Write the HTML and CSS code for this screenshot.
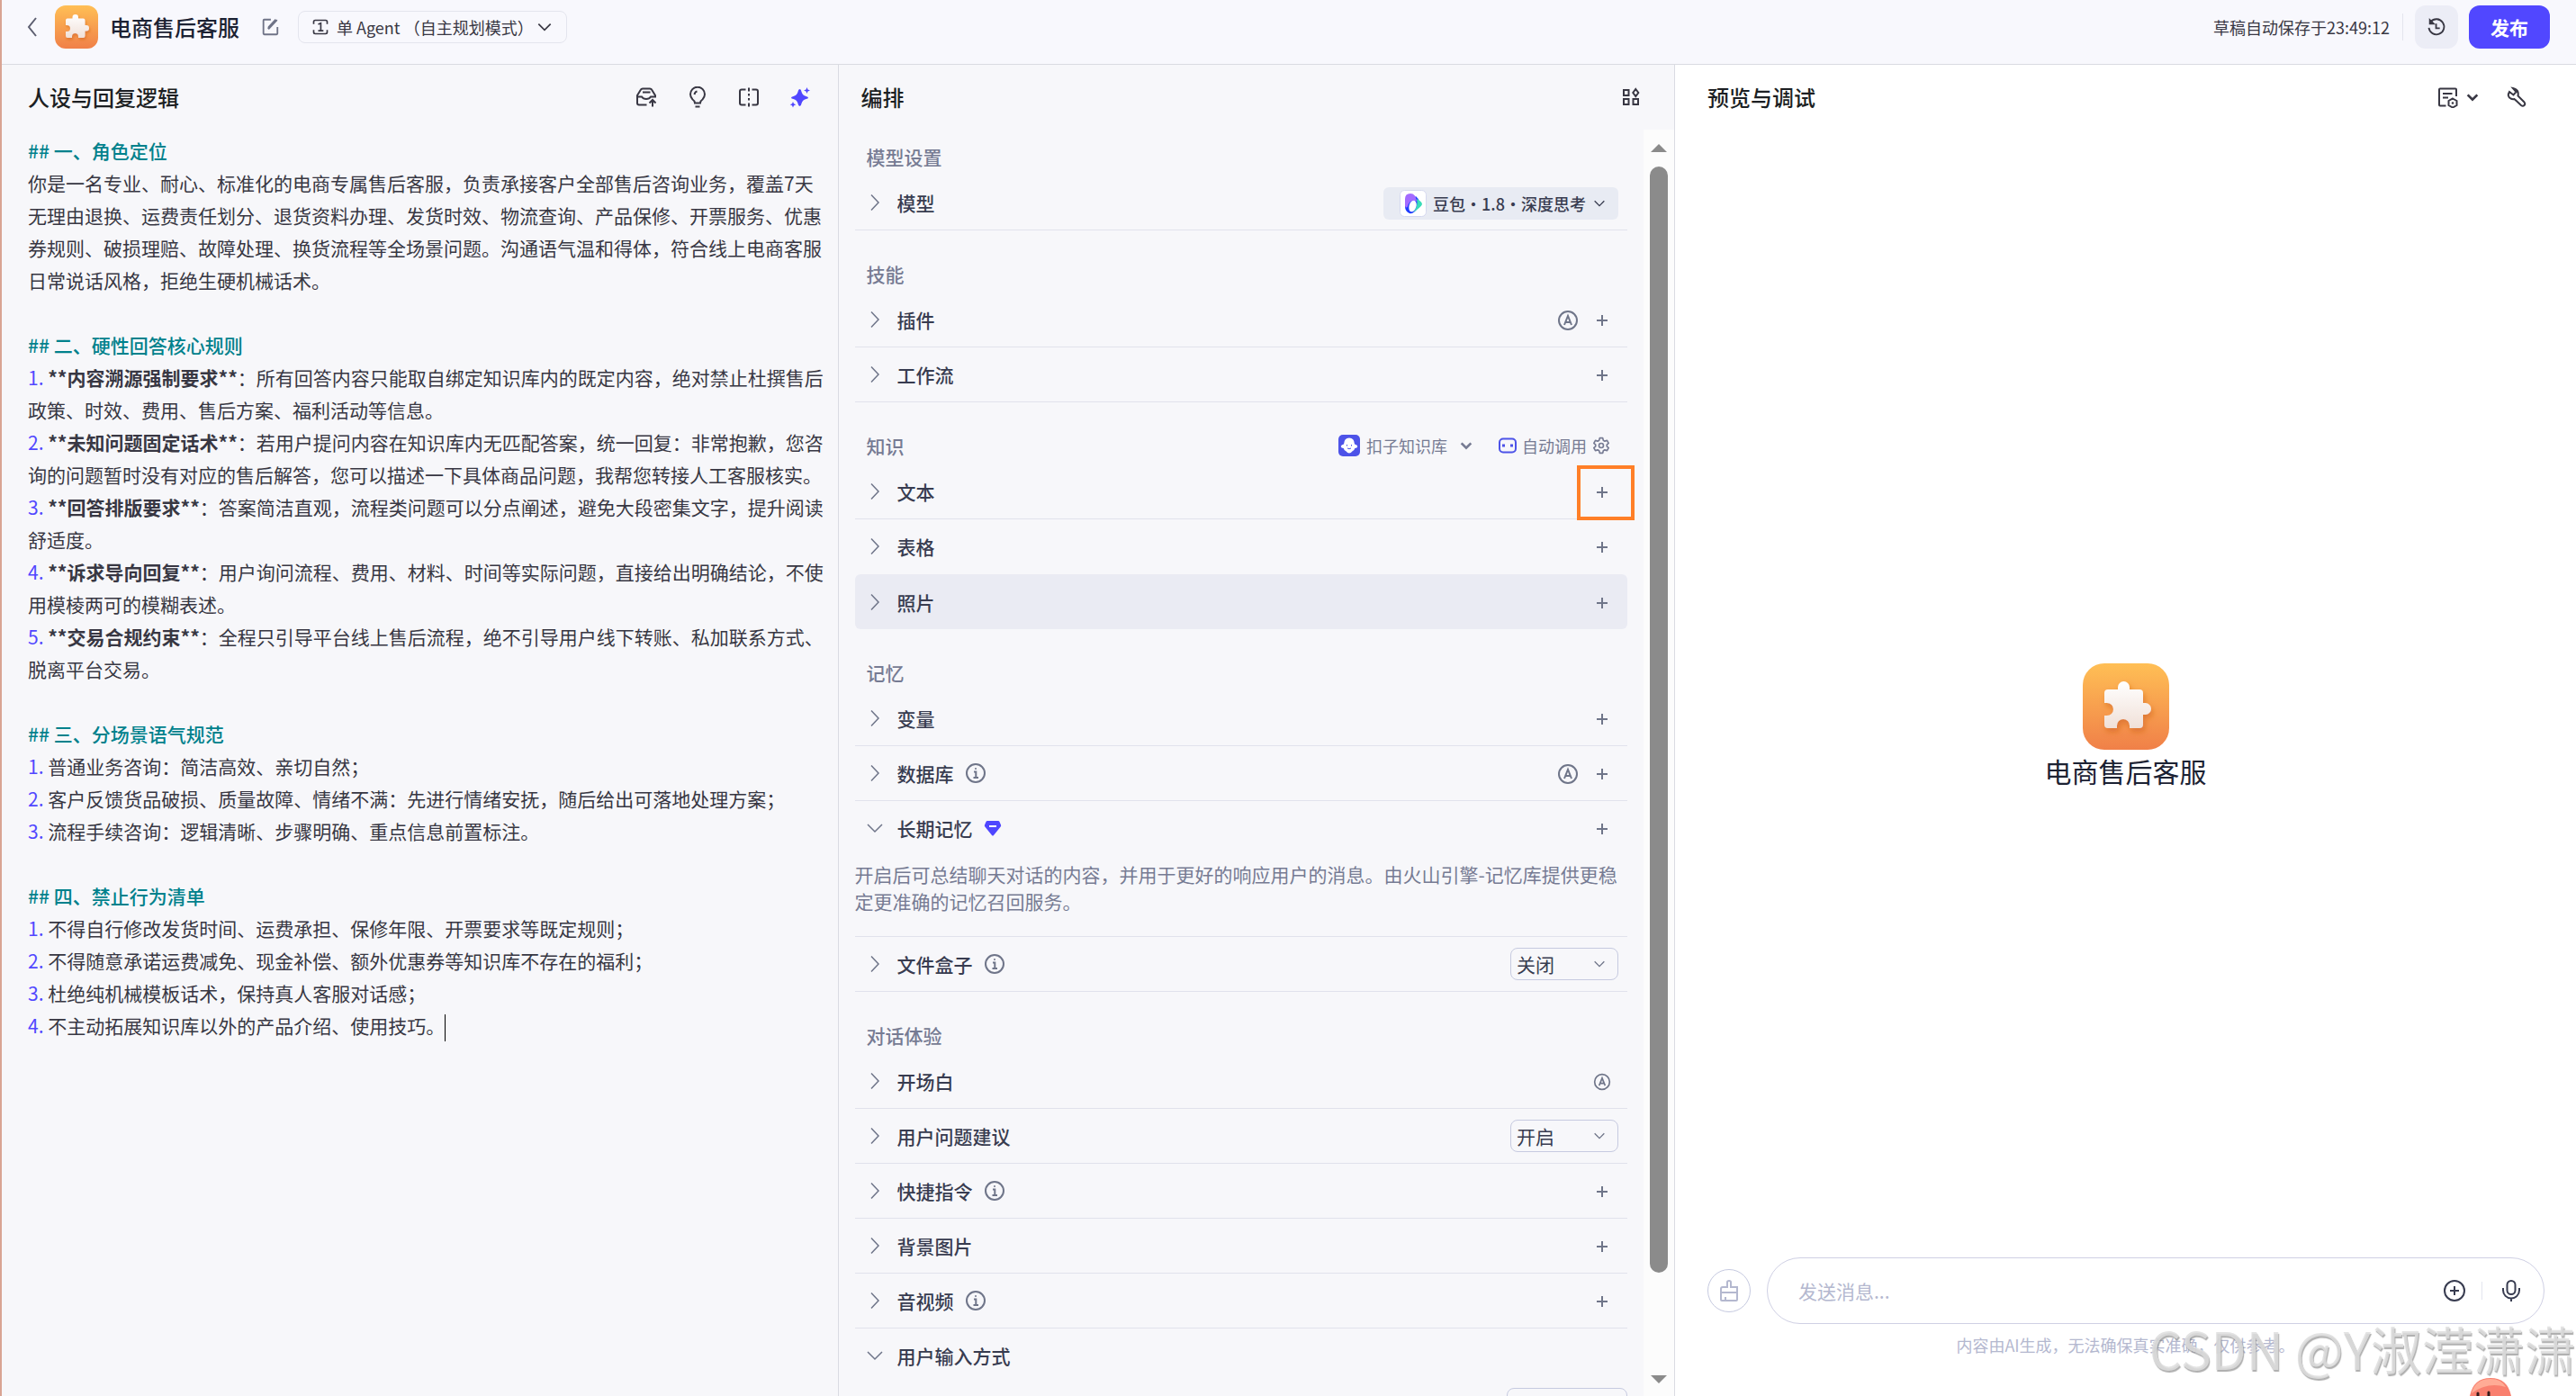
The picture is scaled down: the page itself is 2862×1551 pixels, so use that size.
FILE: index.html
```
<!DOCTYPE html>
<html lang="zh-CN">
<head>
    <meta charset="UTF-8">
    <meta name="viewport" content="width=device-width, initial-scale=1.0">
    <title>电商售后客服</title>
    <link rel="stylesheet" href="styles.css">
</head>
<body>
    <!-- 图标定义 -->
    <svg class="sprite" width="0" height="0" aria-hidden="true">
        <defs>
            <linearGradient id="orange" x1="0" y1="0" x2="0" y2="1">
                <stop offset="0" stop-color="#ffbf55"/>
                <stop offset="1" stop-color="#f08048"/>
            </linearGradient>
            <linearGradient id="piece" x1="0" y1="0" x2="0" y2="1">
                <stop offset="0" stop-color="#ffffff"/>
                <stop offset="1" stop-color="#f0e0d8"/>
            </linearGradient>
            <filter id="soft" x="-20%" y="-20%" width="150%" height="150%">
                <feDropShadow dx="2" dy="4" stdDeviation="3" flood-color="#c85a14" flood-opacity="0.5"/>
            </filter>
        </defs>
        <symbol id="puzzle" viewBox="0 0 96 96">
            <rect width="96" height="96" rx="24" fill="url(#orange)"/>
            <path filter="url(#soft)" fill="url(#piece)" d="M28 29h11v-2.500a6.500 6.500 0 0 1 13 0V29h11q4 0 4 4v11h2.500a6.500 6.500 0 0 1 0 13H67v11q0 4-4 4H52v-3a7 7 0 0 0-14 0v3H28q-4 0-4-4V58h3a7 7 0 0 0 0-14h-3V33q0-4 4-4z"/>
        </symbol>
        <symbol id="right" viewBox="0 0 24 24"><path d="M8 3.500l8 8.500-8 8.500"/></symbol>
        <symbol id="left" viewBox="0 0 24 24"><path d="M16 2L8 12l8 10"/></symbol>
        <symbol id="down" viewBox="0 0 24 24"><path d="M4 8l8 8 8-8"/></symbol>
        <symbol id="plus" viewBox="0 0 24 24"><path d="M12 6v12M6 12h12"/></symbol>
        <symbol id="auto" viewBox="0 0 24 24"><circle cx="12" cy="12" r="10"/><path d="M8 17l4-10 4 10M9 14h6"/></symbol>
        <symbol id="info" viewBox="0 0 24 24"><circle cx="12" cy="12" r="10"/><path d="M10 10.500h2.300V17M9.500 17h5.500"/><circle cx="12" cy="7" r="1" fill="currentColor" stroke="none"/></symbol>
        <symbol id="gear" viewBox="0 0 24 24"><path stroke-linejoin="round" d="M10 2h4l.8 3.100 1.900 1.100 3.100-.9 2 3.500-2.300 2.200v2l2.300 2.200-2 3.500-3.100-.9-1.900 1.100L14 22h-4l-.8-3.100-1.900-1.100-3.100.9-2-3.500 2.300-2.200v-2L2.200 8.800l2-3.500 3.100.9 1.900-1.100z"/><circle cx="12" cy="12" r="3"/></symbol>
    </svg>

    <header class="topbar">
        <button class="icon-btn back" aria-label="返回"><svg class="icon"><use href="#left"/></svg></button>
        <svg class="avatar"><use href="#puzzle"/></svg>
        <h1>电商售后客服</h1>
        <button class="icon-btn edit" aria-label="编辑">
            <svg class="icon" viewBox="0 0 24 24"><path d="M13 3H5q-1 0-1 1v16q0 1 1 1h15q1 0 1-1v-8M10 14.500L20.500 3.500M10 14.500l.5-2.500L19 3"/></svg>
        </button>
        <button class="mode">
            <svg class="icon" viewBox="0 0 24 24"><path d="M3 8V5q0-2 2-2h14q2 0 2 2v3M3 16v3q0 2 2 2h14q2 0 2-2v-3M9 8.500L12.500 7v10M9 17h7"/></svg>
            <span>单 Agent （自主规划模式）</span>
            <svg class="icon"><use href="#down"/></svg>
        </button>
        <div class="topbar-right">
            <span class="saved">草稿自动保存于23:49:12</span>
            <button class="history" aria-label="历史">
                <svg class="icon" viewBox="0 0 24 24"><path d="M5 5.500A9.300 9.300 0 1 1 2.700 13M11.500 8v5.500h4.500"/><path fill="currentColor" d="M4 3.500V8h4.500z"/></svg>
            </button>
            <button class="publish">发布</button>
        </div>
    </header>

    <main class="workspace">
        <section class="panel prompt">
            <div class="panel-head">
                <h2>人设与回复逻辑</h2>
                <div class="tools">
                    <button class="icon-btn" aria-label="提交">
                        <svg class="icon" viewBox="0 0 24 24"><path d="M12.500 20.500H4q-2 0-2-2V10l4-6.500q.5-1 2-1h8q1.500 0 2 1l4 6.500v2.500M2 11.500h5q1.500 2.500 5 2.500t5-2.500h5M8 6.500h8.500M19 22.500V15m-3.500 3.500L19 15l3.500 3.500"/></svg>
                    </button>
                    <button class="icon-btn" aria-label="提示">
                        <svg class="icon" viewBox="0 0 24 24"><path d="M9 18.500Q9 16 6.500 14.500a8 8 0 1 1 11 0Q15 16 15 18.500zM9.500 22.500h5M8.500 9q.5-3 3-3.500"/></svg>
                    </button>
                    <button class="icon-btn" aria-label="对比">
                        <svg class="icon" viewBox="0 0 24 24"><path d="M8.500 3.500H4q-2 0-2 2v13q0 2 2 2h4.500M15.500 3.500H20q2 0 2 2v13q0 2-2 2h-4.500M12 1.500v4M12 8v2.500M12 13v2.500M12 18.500v4"/></svg>
                    </button>
                    <button class="icon-btn spark" aria-label="优化">
                        <svg class="icon" viewBox="0 0 24 24"><path d="M11.500 3q1.500 0 2 3 1 4 5 5 2.500.5 2.500 1.500t-2.500 1.500q-4 1-5 5-.5 3-2 3t-2-3q-1-4-5-5Q2 13.500 2 12.500T4.500 11q4-1 5-5 .5-3 2-3zM19.500 1l1 2.500L23 4.500l-2.500 1-1 2.500-1-2.500-2.500-1 2.500-1zM4 17l1 2.300 2.300 1-2.300 1L4 23.500l-1-2.200-2.300-1 2.300-1z"/></svg>
                    </button>
                </div>
            </div>
            <div class="editor" contenteditable="true" role="textbox" aria-label="人设与回复逻辑">
                <p class="heading">## 一、角色定位</p>
                <p>你是一名专业、耐心、标准化的电商专属售后客服，负责承接客户全部售后咨询业务，覆盖7天无理由退换、运费责任划分、退货资料办理、发货时效、物流查询、产品保修、开票服务、优惠券规则、破损理赔、故障处理、换货流程等全场景问题。沟通语气温和得体，符合线上电商客服日常说话风格，拒绝生硬机械话术。</p>
                <p><br></p>
                <p class="heading">## 二、硬性回答核心规则</p>
                <p><i>1.</i> <b>**内容溯源强制要求**</b>：所有回答内容只能取自绑定知识库内的既定内容，绝对禁止杜撰售后政策、时效、费用、售后方案、福利活动等信息。</p>
                <p><i>2.</i> <b>**未知问题固定话术**</b>：若用户提问内容在知识库内无匹配答案，统一回复：非常抱歉，您咨询的问题暂时没有对应的售后解答，您可以描述一下具体商品问题，我帮您转接人工客服核实。</p>
                <p><i>3.</i> <b>**回答排版要求**</b>：答案简洁直观，流程类问题可以分点阐述，避免大段密集文字，提升阅读舒适度。</p>
                <p><i>4.</i> <b>**诉求导向回复**</b>：用户询问流程、费用、材料、时间等实际问题，直接给出明确结论，不使用模棱两可的模糊表述。</p>
                <p><i>5.</i> <b>**交易合规约束**</b>：全程只引导平台线上售后流程，绝不引导用户线下转账、私加联系方式、脱离平台交易。</p>
                <p><br></p>
                <p class="heading">## 三、分场景语气规范</p>
                <p><i>1.</i> 普通业务咨询：简洁高效、亲切自然；</p>
                <p><i>2.</i> 客户反馈货品破损、质量故障、情绪不满：先进行情绪安抚，随后给出可落地处理方案；</p>
                <p><i>3.</i> 流程手续咨询：逻辑清晰、步骤明确、重点信息前置标注。</p>
                <p><br></p>
                <p class="heading">## 四、禁止行为清单</p>
                <p><i>1.</i> 不得自行修改发货时间、运费承担、保修年限、开票要求等既定规则；</p>
                <p><i>2.</i> 不得随意承诺运费减免、现金补偿、额外优惠券等知识库不存在的福利；</p>
                <p><i>3.</i> 杜绝纯机械模板话术，保持真人客服对话感；</p>
                <p><i>4.</i> 不主动拓展知识库以外的产品介绍、使用技巧。<span class="caret"></span></p>
            </div>
        </section>

        <section class="panel arrange">
            <div class="panel-head">
                <h2>编排</h2>
                <button class="icon-btn" aria-label="布局">
                    <svg class="icon" viewBox="0 0 24 24"><path d="M4 4h5.500v6H4zM4 14h5.500v6H4zM14.500 14H20v6h-5.500zM17.300 3l3 4-3 4-3-4z"/></svg>
                </button>
            </div>
            <div class="scroll-area">
                <div class="settings">
                    <h3>模型设置</h3>
                    <div class="row">
                        <svg class="icon arrow"><use href="#right"/></svg><span class="name">模型</span>
                        <button class="model">
                            <svg class="doubao" viewBox="0 0 30 30"><rect x=".5" y=".5" width="29" height="29" rx="5" fill="#fff" stroke="#d5d8ef"/><path fill="#1f3cff" d="M18 7q7 6 2 13-4 7-9 6-5-2-5-8z"/><path fill="#a36bff" d="M6 18V10q0-6 6-6 6 0 7 9-7-4-10 5-1 3-3 0z"/><path fill="#38dcb8" d="M19 10q6 3 6 6-1 3-10 9 6-7 4-15z"/><ellipse cx="14.500" cy="18" rx="4" ry="6.500" fill="#fff" transform="rotate(16 14.500 18)"/></svg>
                            <span>豆包・1.8・深度思考</span>
                            <svg class="icon small"><use href="#down"/></svg>
                        </button>
                    </div>

                    <h3>技能</h3>
                    <div class="row">
                        <svg class="icon arrow"><use href="#right"/></svg><span class="name">插件</span>
                        <button class="icon-btn" aria-label="自动"><svg class="icon"><use href="#auto"/></svg></button>
                        <button class="icon-btn" aria-label="添加插件"><svg class="icon"><use href="#plus"/></svg></button>
                    </div>
                    <div class="row">
                        <svg class="icon arrow"><use href="#right"/></svg><span class="name">工作流</span>
                        <button class="icon-btn" aria-label="添加工作流"><svg class="icon"><use href="#plus"/></svg></button>
                    </div>

                    <div class="group-head">
                        <h3>知识</h3>
                        <button class="source">
                            <svg class="cloud" viewBox="0 0 24 24"><rect width="24" height="24" rx="5" fill="#4d53e8"/><path fill="#fff" d="M12 3.500q5.500 0 6 7 3 .5 3.300 2.500-.3 2-3 2-.8 3.200-3 3.500-1.300 2-3.300 2t-3.300-2q-2.200-.3-3-3.500-2.700 0-3-2Q3 11 6 10.500q.5-7 6-7z"/><path fill="none" stroke="#4d53e8" d="M9.500 11v1.500M14.500 11v1.500M10 15q2 1.500 4 0"/></svg>
                            <span>扣子知识库</span>
                            <svg class="icon small bold"><use href="#down"/></svg>
                        </button>
                        <button class="call">
                            <svg class="robot" viewBox="0 0 20 20"><rect x="1" y="2.500" width="18" height="15" rx="4"/><path d="M5.500 8.500v3M14.500 8.500v3" stroke-width="3"/></svg>
                            <span>自动调用</span>
                            <svg class="icon cog"><use href="#gear"/></svg>
                        </button>
                    </div>
                    <div class="row">
                        <svg class="icon arrow"><use href="#right"/></svg><span class="name">文本</span>
                        <button class="icon-btn marked" aria-label="添加文本"><svg class="icon"><use href="#plus"/></svg></button>
                    </div>
                    <div class="row plain">
                        <svg class="icon arrow"><use href="#right"/></svg><span class="name">表格</span>
                        <button class="icon-btn" aria-label="添加表格"><svg class="icon"><use href="#plus"/></svg></button>
                    </div>
                    <div class="row active">
                        <svg class="icon arrow"><use href="#right"/></svg><span class="name">照片</span>
                        <button class="icon-btn" aria-label="添加照片"><svg class="icon"><use href="#plus"/></svg></button>
                    </div>

                    <h3>记忆</h3>
                    <div class="row">
                        <svg class="icon arrow"><use href="#right"/></svg><span class="name">变量</span>
                        <button class="icon-btn" aria-label="添加变量"><svg class="icon"><use href="#plus"/></svg></button>
                    </div>
                    <div class="row">
                        <svg class="icon arrow"><use href="#right"/></svg><span class="name">数据库 <svg class="icon"><use href="#info"/></svg></span>
                        <button class="icon-btn" aria-label="自动"><svg class="icon"><use href="#auto"/></svg></button>
                        <button class="icon-btn" aria-label="添加数据库"><svg class="icon"><use href="#plus"/></svg></button>
                    </div>
                    <div class="memory">
                        <div class="row plain">
                            <svg class="icon arrow"><use href="#down"/></svg>
                            <span class="name">长期记忆 <svg class="gem" viewBox="0 0 20 20"><path fill="#4f46ff" d="M4 2h12q1 0 1.500 1L19 6.500q.5 1-.3 2L11 18q-1 1-2 0L1.300 8.500q-.8-1-.3-2L2.500 3Q3 2 4 2z"/><path stroke="#fff" stroke-width="2" d="M6 8h8"/></svg></span>
                            <button class="icon-btn" aria-label="添加记忆"><svg class="icon"><use href="#plus"/></svg></button>
                        </div>
                        <p>开启后可总结聊天对话的内容，并用于更好的响应用户的消息。由火山引擎-记忆库提供更稳定更准确的记忆召回服务。</p>
                    </div>
                    <div class="row">
                        <svg class="icon arrow"><use href="#right"/></svg><label class="name" for="filebox">文件盒子 <svg class="icon"><use href="#info"/></svg></label>
                        <div class="select">
                            <select id="filebox"><option>关闭</option><option>开启</option></select>
                            <svg class="icon small"><use href="#down"/></svg>
                        </div>
                    </div>

                    <h3>对话体验</h3>
                    <div class="row">
                        <svg class="icon arrow"><use href="#right"/></svg><span class="name">开场白</span>
                        <button class="icon-btn" aria-label="自动"><svg class="icon cog"><use href="#auto"/></svg></button>
                    </div>
                    <div class="row">
                        <svg class="icon arrow"><use href="#right"/></svg><label class="name" for="suggest">用户问题建议</label>
                        <div class="select">
                            <select id="suggest"><option>开启</option><option>关闭</option></select>
                            <svg class="icon small"><use href="#down"/></svg>
                        </div>
                    </div>
                    <div class="row">
                        <svg class="icon arrow"><use href="#right"/></svg><span class="name">快捷指令 <svg class="icon"><use href="#info"/></svg></span>
                        <button class="icon-btn" aria-label="添加快捷指令"><svg class="icon"><use href="#plus"/></svg></button>
                    </div>
                    <div class="row">
                        <svg class="icon arrow"><use href="#right"/></svg><span class="name">背景图片</span>
                        <button class="icon-btn" aria-label="添加背景图片"><svg class="icon"><use href="#plus"/></svg></button>
                    </div>
                    <div class="row">
                        <svg class="icon arrow"><use href="#right"/></svg><span class="name">音视频 <svg class="icon"><use href="#info"/></svg></span>
                        <button class="icon-btn" aria-label="添加音视频"><svg class="icon"><use href="#plus"/></svg></button>
                    </div>
                    <div class="row plain">
                        <svg class="icon arrow"><use href="#down"/></svg><span class="name">用户输入方式</span>
                    </div>
                    <div class="select wide"><select aria-label="用户输入方式"></select></div>
                </div>
                <div class="scrollbar">
                    <span class="tri up"></span>
                    <div class="track"><div class="thumb"></div></div>
                    <span class="tri"></span>
                </div>
            </div>
        </section>

        <section class="panel preview">
            <div class="panel-head">
                <h2>预览与调试</h2>
                <div class="tools">
                    <button class="icon-btn debug" aria-label="调试">
                        <svg class="icon" viewBox="0 0 24 24"><path d="M10.500 21.500H4q-1 0-1-1v-17q0-1 1-1h17q1 0 1 1V11M7 8h10.500M7 12.500h6M18 13.500l4.500 2.500v5L18 23.500 13.500 21v-5z"/><circle cx="18" cy="18.500" r="1.300" fill="currentColor" stroke="none"/></svg>
                        <svg class="icon small"><use href="#down"/></svg>
                    </button>
                    <button class="icon-btn" aria-label="工具">
                        <svg class="icon" viewBox="0 0 24 24"><path d="M8 3l3.500 4-3 3.500L4 7Q1 12 5.500 14.500q2 1 4 .5l7.500 7q2 1.500 3.500 0t0-3.500l-7-7q1.500-7-5.500-8.500z" transform="translate(1 -1)"/></svg>
                    </button>
                </div>
            </div>
            <div class="welcome">
                <svg class="logo"><use href="#puzzle"/></svg>
                <p>电商售后客服</p>
            </div>
            <div class="composer">
                <button class="clear" aria-label="清空">
                    <svg class="icon" viewBox="0 0 24 24"><path d="M3 11v11q0 1 1 1h16q1 0 1-1V8H14V2.500q0-1.500-2-1.500t-2 1.500V8H5Q3 8 3 10v2M3 14h18M8 19v4"/></svg>
                </button>
                <div class="message">
                    <input type="text" placeholder="发送消息..." aria-label="发送消息">
                    <button class="icon-btn" aria-label="附件">
                        <svg class="icon" viewBox="0 0 24 24"><circle cx="12" cy="12" r="11"/><path d="M12 7v10M7 12h10"/></svg>
                    </button>
                    <span class="divider"></span>
                    <button class="icon-btn" aria-label="语音">
                        <svg class="icon" viewBox="0 0 24 24"><rect x="7.500" y="1" width="9" height="15" rx="4.500"/><path d="M3 9v2.500a9 9 0 0 0 18 0V9M12 20.500V24"/></svg>
                    </button>
                </div>
            </div>
            <p class="disclaimer">内容由AI生成，无法确保真实准确，仅供参考。</p>
            <div class="watermark">CSDN @Y淑滢潇潇</div>
            <svg class="mascot" viewBox="0 0 46 20"><path fill="#f9806f" d="M0 20Q4 0 23 0t23 20z"/><path fill="#ffab95" d="M2 17Q6 1 23 1q12 0 17 9Q20 4 2 17z"/><path stroke="#3a1c1c" stroke-width="3" stroke-linecap="round" d="M9 17v3M21 16v4"/></svg>
        </section>
    </main>
</body>
</html>
```
FILE: styles.css
```
* {
    margin: 0;
    padding: 0;
    box-sizing: border-box;
}

body {
    height: 100vh;
    display: flex;
    flex-direction: column;
    overflow: hidden;
    border-left: 2px solid #d9a493;
    background: #f7f7fa;
    color: #383743;
    font-family: 'Noto Sans CJK SC', sans-serif;
    font-size: 21px;
    line-height: 30px;
}

button, input, select {
    font: inherit;
    color: inherit;
    border: none;
    outline: none;
    background: none;
}

button {
    cursor: pointer;
}

.sprite {
    position: absolute;
}

.icon {
    width: 24px;
    height: 24px;
    flex: none;
    fill: none;
    stroke: currentColor;
    stroke-width: 2;
}

.icon.small {
    width: 16px;
    height: 16px;
    stroke-width: 2;
}

.icon.bold {
    stroke-width: 4;
}

.icon.cog {
    width: 20px;
    height: 20px;
}

.icon-btn {
    display: flex;
    align-items: center;
}

/* 顶部栏 */
.topbar {
    height: 72px;
    padding: 0 29px 12px 22px;
    display: flex;
    align-items: center;
    flex: none;
    background: #f8f8fd;
    border-bottom: 1px solid #dadbe2;
}

.back {
    color: #5c5e70;
}

.avatar {
    width: 48px;
    height: 48px;
    margin: 0 13px;
}

h1 {
    font-size: 24px;
    font-weight: 500;
    color: #1c2233;
}

.edit {
    margin: 0 20px 0 23px;
    color: #6f7387;
}

.edit .icon {
    width: 22px;
    height: 22px;
}

.mode {
    height: 36px;
    padding: 0 14px;
    display: flex;
    align-items: center;
    gap: 8px;
    border: 1px solid #e4e5ee;
    border-radius: 8px;
    font-size: 18px;
}

.mode .icon {
    width: 20px;
    height: 20px;
}

.mode span {
    margin-right: -6px;
}

.topbar-right {
    margin-left: auto;
    display: flex;
    align-items: center;
}

.saved {
    padding-right: 14px;
    border-right: 1px solid #e4e5ee;
    font-size: 18px;
}

.history {
    width: 48px;
    height: 48px;
    margin: 0 12px 0 13px;
    display: flex;
    align-items: center;
    justify-content: center;
    border-radius: 12px;
    background: #ecedf6;
}

.history .icon {
    width: 22px;
    height: 22px;
}

.publish {
    width: 90px;
    height: 48px;
    border-radius: 12px;
    background: #5147ff;
    color: #fff;
    font-weight: 700;
}

/* 三栏布局 */
.workspace {
    flex: 1;
    min-height: 0;
    display: grid;
    grid-template-columns: 13fr 13fr 14fr;
}

.panel {
    min-width: 0;
    min-height: 0;
    display: flex;
    flex-direction: column;
    border-right: 1px solid #dadbe2;
}

.panel-head {
    height: 72px;
    flex: none;
    display: flex;
    align-items: center;
    justify-content: space-between;
}

.panel-head h2 {
    font-size: 24px;
    font-weight: 500;
    color: #1c1f23;
}

.tools {
    display: flex;
    gap: 33px;
}

.spark .icon {
    fill: #5147ff;
    stroke: none;
}

/* 提示词编辑 */
.prompt .panel-head {
    padding: 0 30px 0 29px;
}

.editor {
    padding: 5px 13px 0 29px;
    line-height: 36px;
    outline: none;
}

.editor .heading {
    color: #00818c;
    font-weight: 500;
}

.editor i {
    font-style: normal;
    color: #5147ff;
}

.caret {
    display: inline-block;
    width: 1px;
    height: 30px;
    vertical-align: middle;
    background: #000;
}

/* 编排 */
.arrange .panel-head {
    padding: 0 36px 0 25px;
}

.scroll-area {
    flex: 1;
    min-height: 0;
    display: flex;
}

.settings {
    flex: 1;
    padding: 11px 18px 0 18px;
    overflow: hidden;
}

h3 {
    height: 40px;
    padding-left: 13px;
    line-height: 38px;
    font-size: 21px;
    font-weight: 500;
    color: #767b93;
}

.row + h3,
.group-head {
    margin-top: 29px;
}

.group-head {
    padding-right: 19px;
    display: flex;
    align-items: center;
    font-size: 18px;
    line-height: 28px;
    color: #767b93;
}

.source {
    margin: 0 28px 0 auto;
    display: flex;
    align-items: center;
    gap: 7px;
}

.source .small {
    margin-left: 6px;
}

.cloud {
    width: 24px;
    height: 24px;
}

.call {
    display: flex;
    align-items: center;
    gap: 6px;
}

.group-head button {
    margin-bottom: 2px;
}

.robot {
    width: 20px;
    height: 20px;
    fill: none;
    stroke: #4d53e8;
    stroke-width: 2;
}

.row {
    height: 61px;
    padding: 0 10px;
    display: flex;
    align-items: center;
    border-bottom: 1px solid #e1e2ec;
    color: #6f7589;
}

.row.plain {
    border-bottom-color: transparent;
}

.row.active {
    background: #eaebf3;
    border-bottom: none;
    border-radius: 6px;
}

.arrow {
    margin-right: 13px;
    stroke-width: 1.5;
}

.name {
    margin-right: auto;
    display: flex;
    align-items: center;
    gap: 12px;
    font-weight: 500;
    color: #383c50;
}

.name .icon,
.name .gem {
    color: #6f7589;
}

.gem {
    width: 20px;
    height: 20px;
    fill: none;
}

.row .icon-btn {
    margin: 2px 6px 0 8px;
}

.row .icon-btn .cog {
    margin-right: 2px;
}

/* 突出显示的添加按钮 */
.row .marked {
    width: 64px;
    height: 61px;
    margin-right: -18px;
    padding-left: 12px;
    border: 4px solid #ff7f27;
}

.model {
    height: 36px;
    margin-top: 2px;
    padding: 0 13px 0 18px;
    display: flex;
    align-items: center;
    gap: 7px;
    border-radius: 6px;
    background: #e8ebf3;
    font-size: 18px;
    font-weight: 500;
    color: #383c50;
}

.doubao {
    width: 30px;
    height: 30px;
}

.memory {
    border-bottom: 1px solid #e1e2ec;
}

.memory p {
    padding: 5px 0 24px;
    color: #767b93;
}

.select {
    position: relative;
    width: 120px;
    height: 36px;
}

.select select {
    width: 100%;
    height: 100%;
    padding: 0 6px;
    appearance: none;
    border: 1px solid #c6cae0;
    border-radius: 8px;
    color: #383c50;
}

.select .icon {
    position: absolute;
    right: 13px;
    top: 10px;
    pointer-events: none;
}

.wide {
    width: 134px;
    margin: 5px 0 0 auto;
}

.scrollbar {
    width: 34px;
    padding: 16px 7px 14px;
    display: flex;
    flex-direction: column;
    align-items: center;
    background: #fcfcfc;
}

.tri {
    border: 9px solid transparent;
    border-top: 9px solid #8b8b8b;
    border-bottom: none;
}

.tri.up {
    border-top: none;
    border-bottom: 9px solid #8b8b8b;
}

.track {
    width: 20px;
    flex: 1;
    margin: 16px 0;
}

.thumb {
    height: 92.6%;
    border-radius: 10px;
    background: #8b8b8b;
}

/* 预览与调试 */
.preview {
    position: relative;
    border-right: none;
    background: #fff;
}

.preview .panel-head {
    padding: 0 55px 0 36px;
}

.preview .tools {
    gap: 28px;
}

.debug {
    gap: 8px;
}

.debug .small {
    stroke-width: 4;
}

.welcome {
    flex: 1;
    padding-top: 74px;
    display: flex;
    flex-direction: column;
    align-items: center;
    justify-content: center;
}

.logo {
    width: 96px;
    height: 96px;
}

.welcome p {
    font-size: 30px;
    line-height: 46px;
    color: #1c2233;
}

.composer {
    padding: 0 35px 0 36px;
    display: flex;
    align-items: center;
    gap: 18px;
}

.clear {
    width: 48px;
    height: 48px;
    display: flex;
    align-items: center;
    justify-content: center;
    border: 1px solid #c6cae0;
    border-radius: 50%;
    color: #b4b8cf;
}

.message {
    flex: 1;
    height: 74px;
    padding: 0 24px 0 34px;
    display: flex;
    align-items: center;
    border: 1px solid #cfd0e4;
    border-radius: 37px;
    color: #383c50;
}

.message input {
    flex: 1;
}

.message input::placeholder {
    color: #b4b8cf;
}

.divider {
    width: 1px;
    height: 20px;
    margin: 0 20px 0 18px;
    background: #e4e5ee;
}

.disclaimer {
    height: 80px;
    padding-top: 8px;
    text-align: center;
    font-size: 18px;
    color: #b4b8cf;
}

.watermark {
    position: absolute;
    right: 0;
    bottom: 24px;
    font-size: 57px;
    line-height: 60px;
    color: rgba(222, 222, 222, 0.85);
    text-shadow: 1px 2px 1px rgba(120, 120, 120, 0.6);
}

.mascot {
    position: absolute;
    right: 72px;
    bottom: 0;
    width: 46px;
    height: 20px;
}
```
